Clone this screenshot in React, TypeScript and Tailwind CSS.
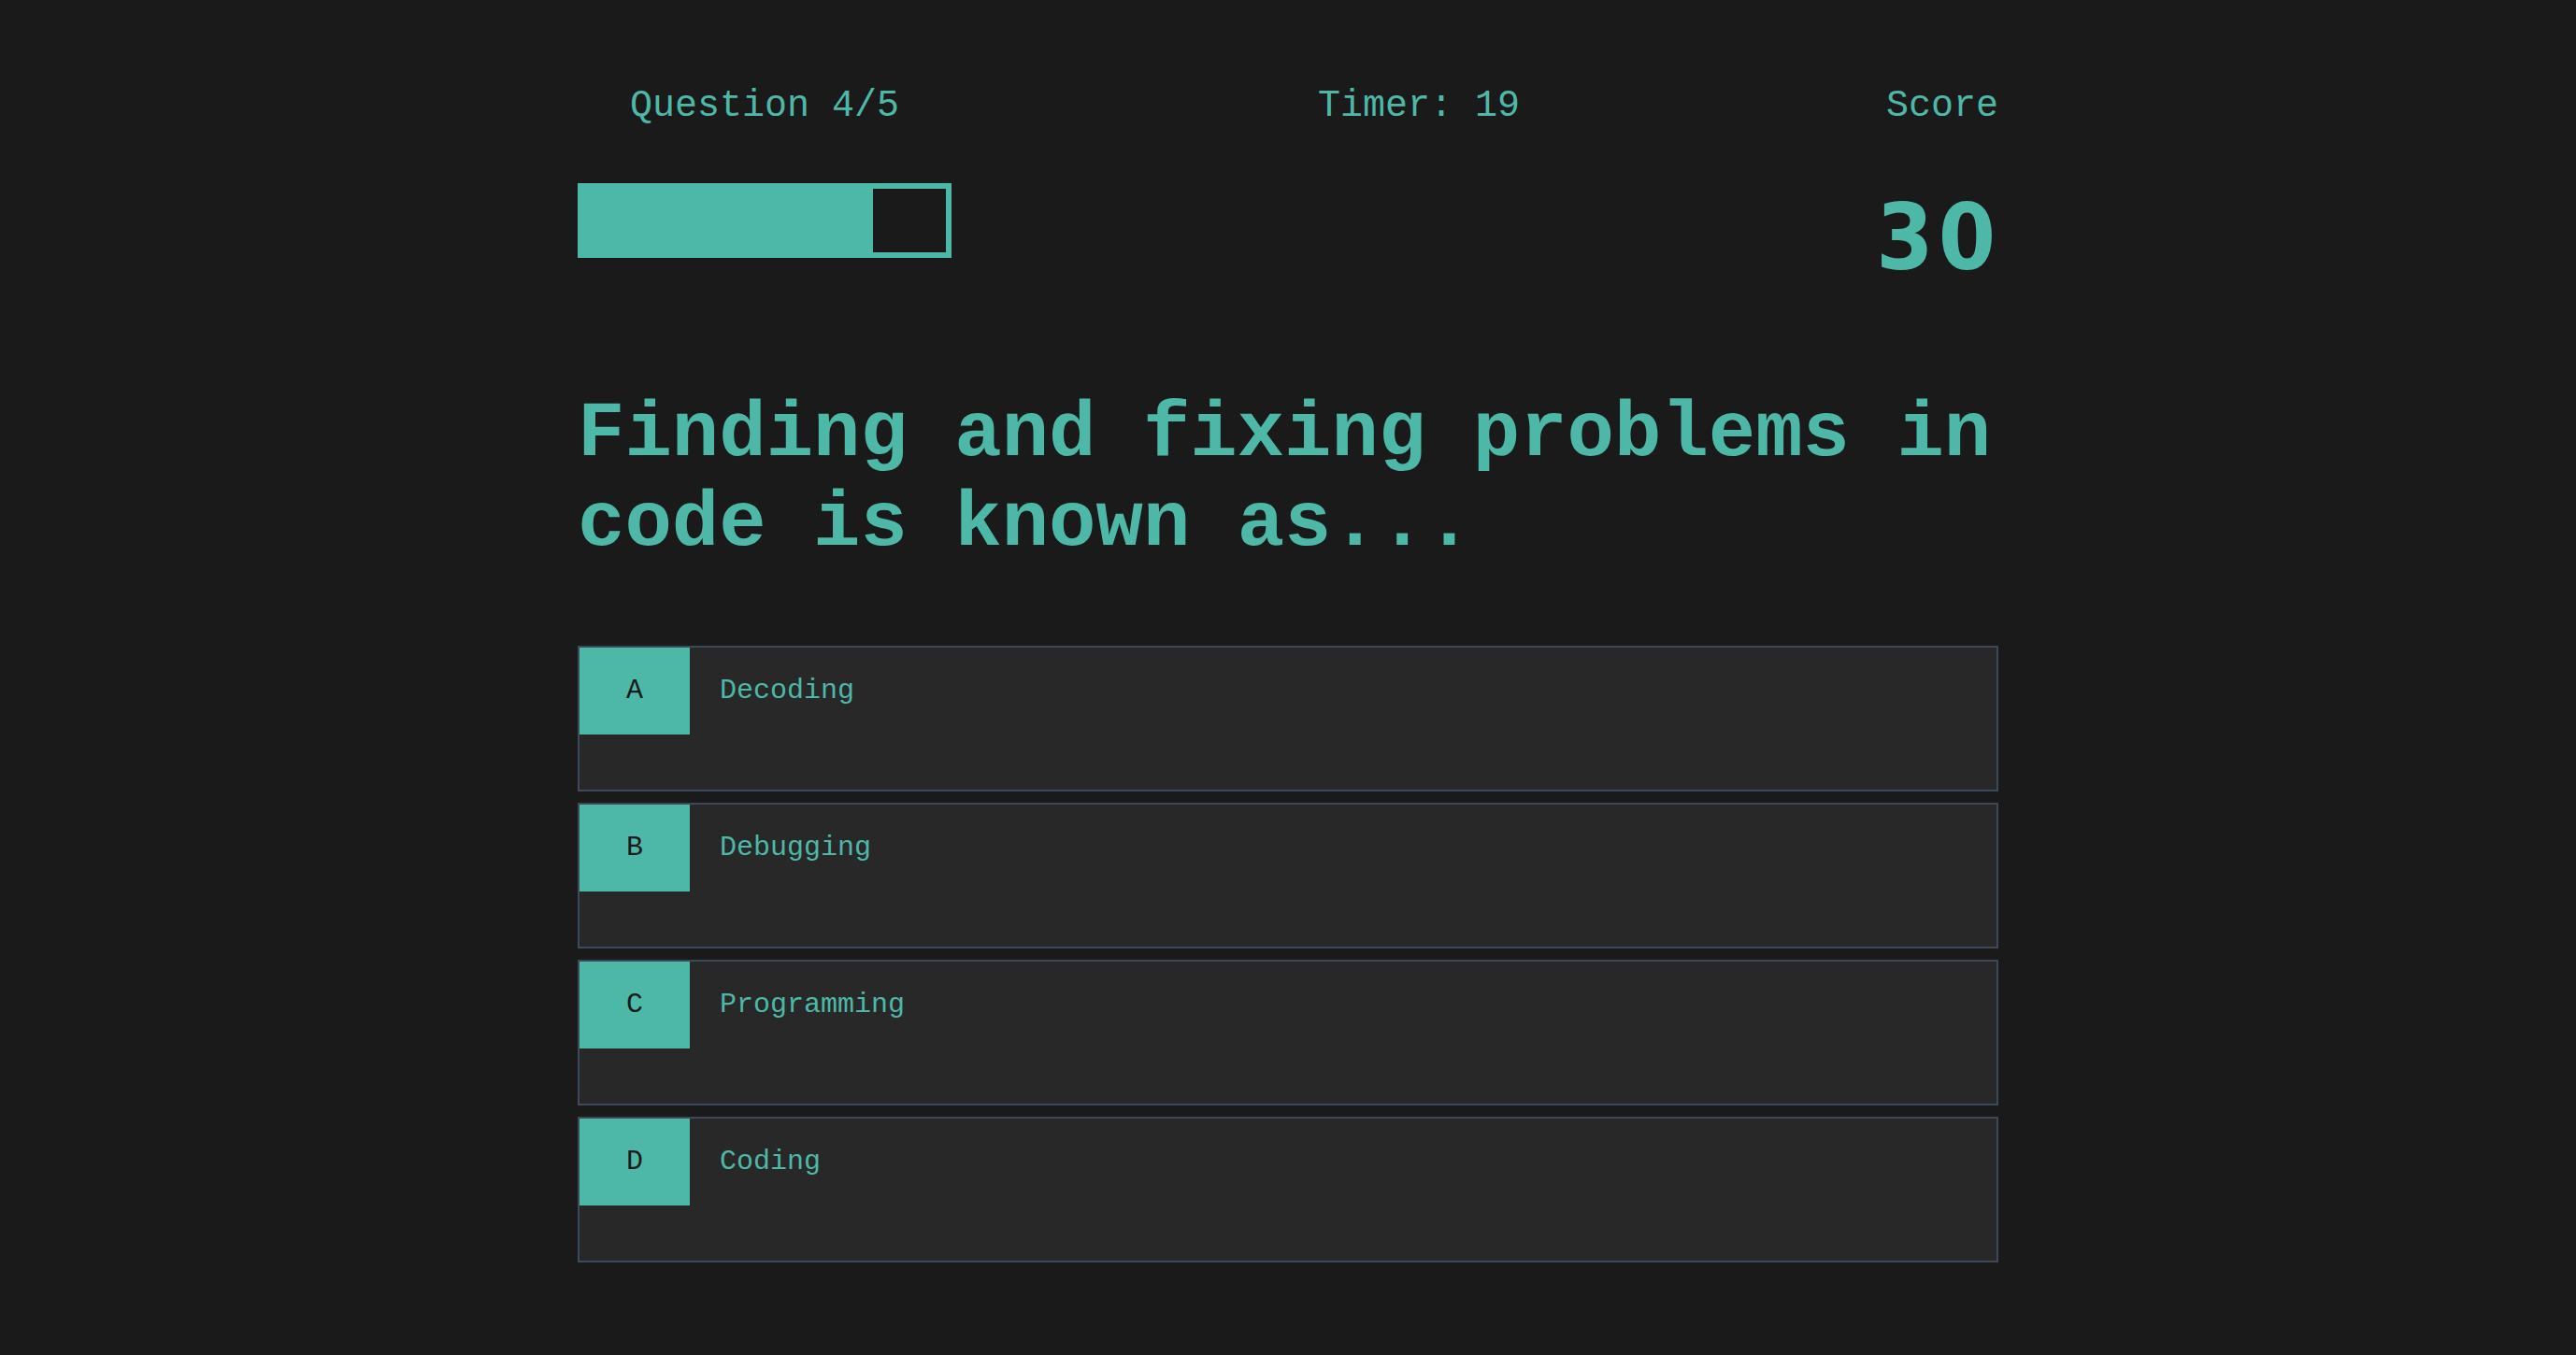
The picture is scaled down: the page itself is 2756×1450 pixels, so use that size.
import React from "react";

const options = [
  { letter: "A", text: "Decoding" },
  { letter: "B", text: "Debugging" },
  { letter: "C", text: "Programming" },
  { letter: "D", text: "Coding" },
];

export default function App() {
  const progress = 80;
  return (
    <div className="min-h-screen bg-[#1a1a1a] text-[#4db8a8] font-['Courier_New','Liberation_Mono',monospace]">
      <div className="mx-auto w-[1520px] pt-[90px]">
        <header className="flex items-start justify-between">
          <div className="flex w-[400px] flex-col items-center">
            <div className="text-[40px] leading-[48px]">Question 4/5</div>
            <div className="mt-[58px] h-[80px] w-[400px] border-[6px] border-[#4db8a8]">
              <div className="h-full bg-[#4db8a8]" style={{ width: `${progress}%` }} />
            </div>
          </div>
          <div className="text-[40px] leading-[48px]">Timer: 19</div>
          <div className="flex w-[120px] flex-col items-end">
            <div className="text-[40px] leading-[48px]">Score</div>
            <div className="mt-[68px] mr-[-2px] font-['DejaVu_Sans_Condensed','DejaVu_Sans',sans-serif] font-stretch-condensed text-[98px] font-bold leading-[96px] tracking-[5px]">
              30
            </div>
          </div>
        </header>

        <h1 className="mt-[115px] text-[84px] font-bold leading-[96px]">
          Finding and fixing problems in code is known as...
        </h1>

        <div className="mt-[82px] flex flex-col gap-[12px]">
          {options.map((o) => (
            <button
              key={o.letter}
              className="flex h-[156px] w-full items-start border-2 border-[#3a4a5c] bg-[#282828] text-left"
            >
              <span className="flex h-[93px] w-[118px] items-center justify-center bg-[#4db8a8] text-[30px] text-[#1a1a1a]">
                {o.letter}
              </span>
              <span className="flex h-[93px] items-center pl-[32px] text-[30px] text-[#4db8a8]">
                {o.text}
              </span>
            </button>
          ))}
        </div>
      </div>
    </div>
  );
}
